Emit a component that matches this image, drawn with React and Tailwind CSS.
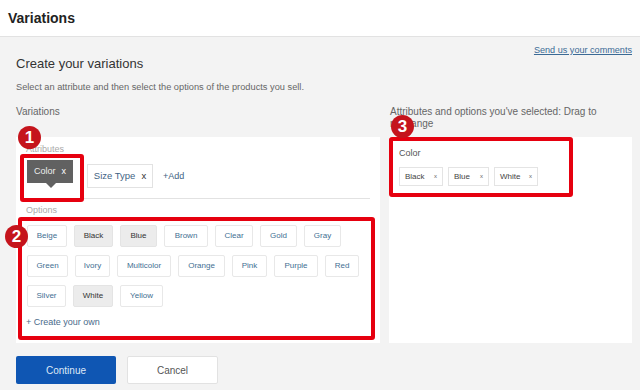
import React from "react";

const rows = [
  [
    { name: "Beige", w: "w-[40px]" },
    { name: "Black", w: "w-[39px]", on: true },
    { name: "Blue", w: "w-[37px]", on: true },
    { name: "Brown", w: "w-[44px]" },
    { name: "Clear", w: "w-[38px]" },
    { name: "Gold", w: "w-[37px]" },
    { name: "Gray", w: "w-[37px]" },
  ],
  [
    { name: "Green", w: "w-[41px]" },
    { name: "Ivory", w: "w-[35px]" },
    { name: "Multicolor", w: "w-[54px]" },
    { name: "Orange", w: "w-[47px]" },
    { name: "Pink", w: "w-[35px]" },
    { name: "Purple", w: "w-[44px]" },
    { name: "Red", w: "w-[34px]" },
  ],
  [
    { name: "Silver", w: "w-[39px]" },
    { name: "White", w: "w-[40px]", on: true },
    { name: "Yellow", w: "w-[43px]" },
  ],
];

const selected = [
  { name: "Black", w: "w-[44px]" },
  { name: "Blue", w: "w-[41px]" },
  { name: "White", w: "w-[44px]" },
];

// * numbered callout over the red boxes
const Badge = ({ n, className }) => (
  <div
    className={`absolute z-10 w-[23px] h-[23px] rounded-full bg-[#c5141c] text-white font-bold text-[17px] leading-[23px] text-center ${className}`}
  >
    {n}
  </div>
);

const OptionChip = ({ item }) => (
  <div
    className={`${item.w} h-[22px] flex items-center justify-center border rounded-[2px] text-[8px] ${
      item.on
        ? "bg-[#ececec] border-[#e4e4e4] text-[#333]"
        : "bg-white border-[#e8e8e8] text-[#3f6f92]"
    }`}
  >
    {item.name}
  </div>
);

export default function App() {
  return (
    <div className="w-[640px] h-[390px] overflow-hidden bg-[#f3f3f3] font-['Liberation_Sans',Arial,sans-serif] text-[#333]">
      {/* HEADER */}
      <div className="h-[37px] bg-white border-b border-[#e2e2e2] flex items-center pl-2">
        <h1 className="text-[14px] font-bold text-[#222] leading-none">
          Variations
        </h1>
      </div>

      <div className="pl-4 pr-2">
        <div className="flex justify-end pt-[7px]">
          <a className="text-[9.1px] leading-[12px] text-[#3b6a95] underline">
            Send us your comments
          </a>
        </div>
        <h2 className="text-[13px] leading-[16px] text-[#333]">
          Create your variations
        </h2>
        <p className="mt-[9px] text-[9.25px] leading-[12px] text-[#666]">
          Select an attribute and then select the options of the products you
          sell.
        </p>

        <div className="flex gap-[9px] mt-[12px]">
          {/* LEFT COLUMN */}
          <div className="w-[364px]">
            <div className="h-[32px] text-[10px] leading-[14px] text-[#666]">
              Variations
            </div>
            <div className="h-[206px] bg-white px-[10px] pt-[7px]">
              <div className="text-[9px] leading-[10px] text-[#aaa]">
                Attributes
              </div>
              <div className="h-[45px] border-b border-[#e2e2e2] flex items-start">
                <div className="relative -ml-[6px] h-[48px] border-4 border-[#e6000f] rounded-[3px] pl-[3px] pr-[7px] pt-[2px] shrink-0">
                  <Badge n="1" className="-left-[6px] -top-[32px]" />
                  <div className="relative w-[46px] h-[23px] bg-[#616161] flex items-center justify-center gap-[6px] text-[9px] text-[#eee]">
                    Color <span className="text-white text-[9px]">x</span>
                    <div className="absolute left-[19px] top-[23px] w-0 h-0 border-l-[5px] border-r-[5px] border-t-[5px] border-l-transparent border-r-transparent border-t-[#616161]" />
                  </div>
                </div>
                <div className="ml-[3px] mt-[10px] w-[66px] h-[24px] bg-white border border-[#e2e2e2] flex items-center justify-center gap-[6px] text-[9.5px] text-[#3f6384]">
                  Size Type <span className="text-[#333]">x</span>
                </div>
                <div className="ml-[10px] mt-[16px] text-[9px] leading-[12px] text-[#3f6384]">
                  +Add
                </div>
              </div>
              <div className="mt-[6px] text-[9px] leading-[10px] text-[#aaa]">
                Options
              </div>
              <div className="relative mt-[2px] -ml-[8px] -mr-[5px] h-[123px] border-4 border-[#e6000f] rounded-[3px] pl-[5px] pt-[4px]">
                <Badge n="2" className="-left-[17px] top-[4px]" />
                <div className="flex flex-col gap-[8px]">
                  {rows.map((row, i) => (
                    <div key={i} className="flex gap-[7px]">
                      {row.map((item) => (
                        <OptionChip key={item.name} item={item} />
                      ))}
                    </div>
                  ))}
                </div>
                <div className="mt-[9px] -ml-px text-[9px] leading-[12px] text-[#4a6b8a]">
                  + Create your own
                </div>
              </div>
            </div>
          </div>

          {/* RIGHT COLUMN */}
          <div className="w-[243px]">
            <div className="h-[32px] pl-px pt-px text-[10px] leading-[12px] text-[#666]">
              Attributes and options you've selected: Drag to rearrange
            </div>
            <div className="h-[206px] bg-white">
              <div className="relative w-[184px] h-[60px] border-4 border-[#e6000f] rounded-[3px] pl-[6px] pt-[6px]">
                <Badge n="3" className="-left-[2px] -top-[26px]" />
                <div className="text-[9px] leading-[12px] text-[#555]">
                  Color
                </div>
                <div className="flex gap-[5px] mt-[8px]">
                  {selected.map((item) => (
                    <div
                      key={item.name}
                      className={`${item.w} h-[19px] border border-[#e4e4e4] flex items-center justify-between px-[5px] text-[8px] text-[#444]`}
                    >
                      {item.name}
                      <span className="text-[6px] text-[#666]">x</span>
                    </div>
                  ))}
                </div>
              </div>
            </div>
          </div>
        </div>

        {/* ACTIONS */}
        <div className="flex gap-[11px] mt-[13px]">
          <button className="w-[100px] h-[28px] bg-[#0f56b3] rounded-[2px] text-[10px] text-[#dde8f6]">
            Continue
          </button>
          <button className="w-[91px] h-[28px] bg-white border border-[#e2e2e2] rounded-[2px] text-[10px] text-[#555]">
            Cancel
          </button>
        </div>
      </div>
    </div>
  );
}
